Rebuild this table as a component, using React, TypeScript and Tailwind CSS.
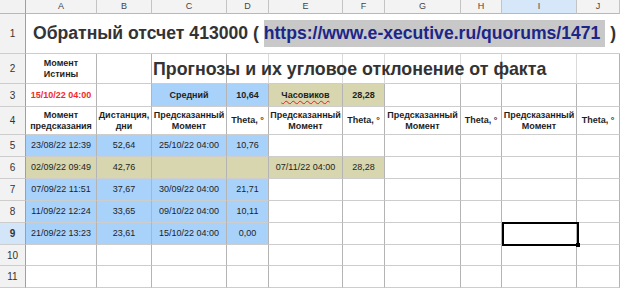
import React from "react";

const cols = ["A", "B", "C", "D", "E", "F", "G", "H", "I", "J"];

type CellProps = {
  children?: React.ReactNode;
  className?: string;
};

const Cell = ({ children, className = "" }: CellProps) => (
  <div
    className={`flex items-center justify-center text-center border-r border-b border-r-[#b4b4b4] border-b-[#cdcdcd] text-[9px] leading-[11px] text-[#1e1e1e] ${className}`}
  >
    {children}
  </div>
);

const RowHead = ({ n, active }: { n: number; active?: boolean }) => (
  <div
    className={`flex items-center justify-center border-r border-b border-r-[#9f9f9f] border-b-[#cdcdcd] text-[10px] text-[#333] ${
      active ? "bg-[#d3e5f8] font-bold" : "bg-[#f2f2f2]"
    }`}
  >
    {n}
  </div>
);

const blue = "bg-[#a9d2fa] border-r-[#8e9aa6] border-b-[#8e9aa6]";
const tan = "bg-[#d7d6ae] border-r-[#9a9a86] border-b-[#9a9a86]";
const head = "font-bold";

const rows = [
  { n: 5, a: "23/08/22 12:39", b: "52,64", c: "25/10/22 04:00", d: "10,76", tone: blue },
  { n: 6, a: "02/09/22 09:49", b: "42,76", c: "", d: "", tone: tan },
  { n: 7, a: "07/09/22 11:51", b: "37,67", c: "30/09/22 04:00", d: "21,71", tone: blue },
  { n: 8, a: "11/09/22 12:24", b: "33,65", c: "09/10/22 04:00", d: "10,11", tone: blue },
  { n: 9, a: "21/09/22 13:23", b: "23,61", c: "15/10/22 04:00", d: "0,00", tone: blue },
];

export default function App() {
  return (
    <div className="relative w-[620px] h-[289px] overflow-hidden bg-white font-['Liberation_Sans',Arial,sans-serif]">
      <div className="grid grid-cols-[26px_71px_55px_75px_42px_74px_42px_76px_41px_75px_43px] grid-rows-[14px_40px_30px_23px_28px_22px_22px_22px_22px_22px_21px_22px]">
        {/* column headers */}
        <div className="bg-[#f2f2f2] border-r border-b border-r-[#9f9f9f] border-b-[#b8b8b8]" />
        {cols.map((c) => (
          <div
            key={c}
            className={`flex items-center justify-center border-r border-b border-r-[#c4c4c4] border-b-[#b8b8b8] text-[9px] text-[#444] ${
              c === "I" ? "bg-[#d6e7f9]" : "bg-[#f3f3f3]"
            }`}
          >
            {c}
          </div>
        ))}

        {/* row 1 */}
        <RowHead n={1} />
        <div className="col-span-10 flex items-center pl-[7px] border-b border-b-[#cdcdcd] whitespace-nowrap text-[17.6px] font-bold text-[#333]">
          Обратный отсчет 413000 (&nbsp;
          <span className="bg-[#c8c8c8] text-[#1b2688]">https://www.e-xecutive.ru/quorums/1471&nbsp;</span>
          &nbsp;)
        </div>

        {/* row 2 */}
        <RowHead n={2} />
        <Cell className={head}>
          Момент
          <br />
          Истины
        </Cell>
        <Cell />
        <Cell className="justify-start overflow-visible">
          <span className="relative z-10 pl-[1px] whitespace-nowrap text-[17.8px] leading-[20px] font-bold text-[#333]">
            Прогнозы и их угловое отклонение от факта
          </span>
        </Cell>
        <Cell className="border-r-[#dadada]" />
        <Cell className="border-r-[#dadada]" />
        <Cell className="border-r-[#dadada]" />
        <Cell className="border-r-[#dadada]" />
        <Cell className="border-r-[#dadada]" />
        <Cell className="border-r-[#dadada]" />
        <Cell />

        {/* row 3 */}
        <RowHead n={3} />
        <Cell className="font-bold text-[#f22a2a]">15/10/22 04:00</Cell>
        <Cell />
        <Cell className={`${blue} font-bold`}>Средний</Cell>
        <Cell className={`${blue} font-bold`}>10,64</Cell>
        <Cell className={`${tan} font-bold`}>
          <span className="underline decoration-wavy decoration-[#e02020] decoration-1 underline-offset-2">
            Часовиков
          </span>
        </Cell>
        <Cell className={`${tan} font-bold`}>28,28</Cell>
        <Cell />
        <Cell />
        <Cell />
        <Cell />

        {/* row 4 */}
        <RowHead n={4} />
        <Cell className={head}>
          Момент
          <br />
          предсказания
        </Cell>
        <Cell className={head}>
          Дистанция,
          <br />
          дни
        </Cell>
        <Cell className={head}>
          Предсказанный
          <br />
          Момент
        </Cell>
        <Cell className={head}>Theta, °</Cell>
        <Cell className={head}>
          Предсказанный
          <br />
          Момент
        </Cell>
        <Cell className={head}>Theta, °</Cell>
        <Cell className={head}>
          Предсказанный
          <br />
          Момент
        </Cell>
        <Cell className={head}>Theta, °</Cell>
        <Cell className={head}>
          Предсказанный
          <br />
          Момент
        </Cell>
        <Cell className={head}>Theta, °</Cell>

        {/* data rows */}
        {rows.map((r) => (
          <React.Fragment key={r.n}>
            <RowHead n={r.n} active={r.n === 9} />
            <Cell className={r.tone}>{r.a}</Cell>
            <Cell className={r.tone}>{r.b}</Cell>
            <Cell className={r.tone}>{r.c}</Cell>
            <Cell className={r.tone}>{r.d}</Cell>
            <Cell className={r.n === 6 ? tan : ""}>{r.n === 6 ? "07/11/22 04:00" : ""}</Cell>
            <Cell className={r.n === 6 ? tan : ""}>{r.n === 6 ? "28,28" : ""}</Cell>
            <Cell />
            <Cell />
            <Cell />
            <Cell />
          </React.Fragment>
        ))}

        {/* empty rows */}
        {[10, 11].map((n) => (
          <React.Fragment key={n}>
            <RowHead n={n} />
            {cols.map((c) => (
              <Cell key={c} />
            ))}
          </React.Fragment>
        ))}
      </div>

      {/* selected cell I9 */}
      <div className="absolute left-[502px] top-[222px] w-[77px] h-[24px] border-2 border-black">
        <div className="absolute -right-[3px] -bottom-[3px] w-[4px] h-[4px] bg-black" />
      </div>
    </div>
  );
}
